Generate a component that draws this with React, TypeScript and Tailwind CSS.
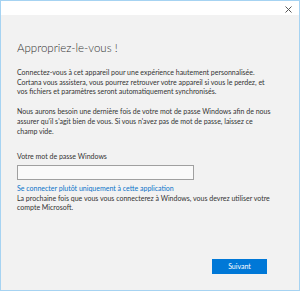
import React from "react";

const L = ({ children }: { children: React.ReactNode }) => (
  <div className="whitespace-nowrap">{children}</div>
);

export default function App() {
  return (
    <div className="w-[300px] h-[291px] border border-[#a6d3f2] bg-[#f2f2f2] flex flex-col overflow-hidden" style={{ fontFamily: 'Lato, "Noto Sans", sans-serif' }}>
      <div className="h-[14px] bg-white flex items-center justify-end pr-[7px] shrink-0">
        <svg width="7" height="7" viewBox="0 0 7 7" className="mt-[2px]">
          <path d="M0.5 0.5 L6.5 6.5 M6.5 0.5 L0.5 6.5" stroke="#555" strokeWidth="1" />
        </svg>
      </div>
      <div className="flex-1 flex flex-col pl-[16px] pr-[20px] pt-[25px] text-[7px] leading-[9.7px] text-[#333]">
        <h1 className="text-[11.5px] leading-[16px] font-light text-[#333]">Appropriez-le-vous !</h1>
        <div className="mt-[12px]">
          <L>Connectez-vous à cet appareil pour une expérience hautement personnalisée.</L>
          <L>Cortana vous assistera, vous pourrez retrouver votre appareil si vous le perdez, et</L>
          <L>vos fichiers et paramètres seront automatiquement synchronisés.</L>
        </div>
        <div className="mt-[10px]">
          <L>Nous aurons besoin une dernière fois de votre mot de passe Windows afin de nous</L>
          <L>assurer qu'il s'agit bien de vous. Si vous n'avez pas de mot de passe, laissez ce</L>
          <L>champ vide.</L>
        </div>
        <div className="mt-[16px]">Votre mot de passe Windows</div>
        <div className="mt-[3px] w-[177px] h-[15px] border border-[#a0a0a0] bg-[#fafafa]" />
        <div className="mt-[4px] text-[#0a72c9]">Se connecter plutôt uniquement à cette application</div>
        <div>
          <L>La prochaine fois que vous vous connecterez à Windows, vous devrez utiliser votre</L>
          <L>compte Microsoft.</L>
        </div>
        <div className="flex-1" />
        <div className="flex justify-end pr-[12px] pb-[16px]">
          <button className="w-[55px] h-[15px] bg-[#0078d7] text-white text-[7px] leading-[15px]">Suivant</button>
        </div>
      </div>
    </div>
  );
}
